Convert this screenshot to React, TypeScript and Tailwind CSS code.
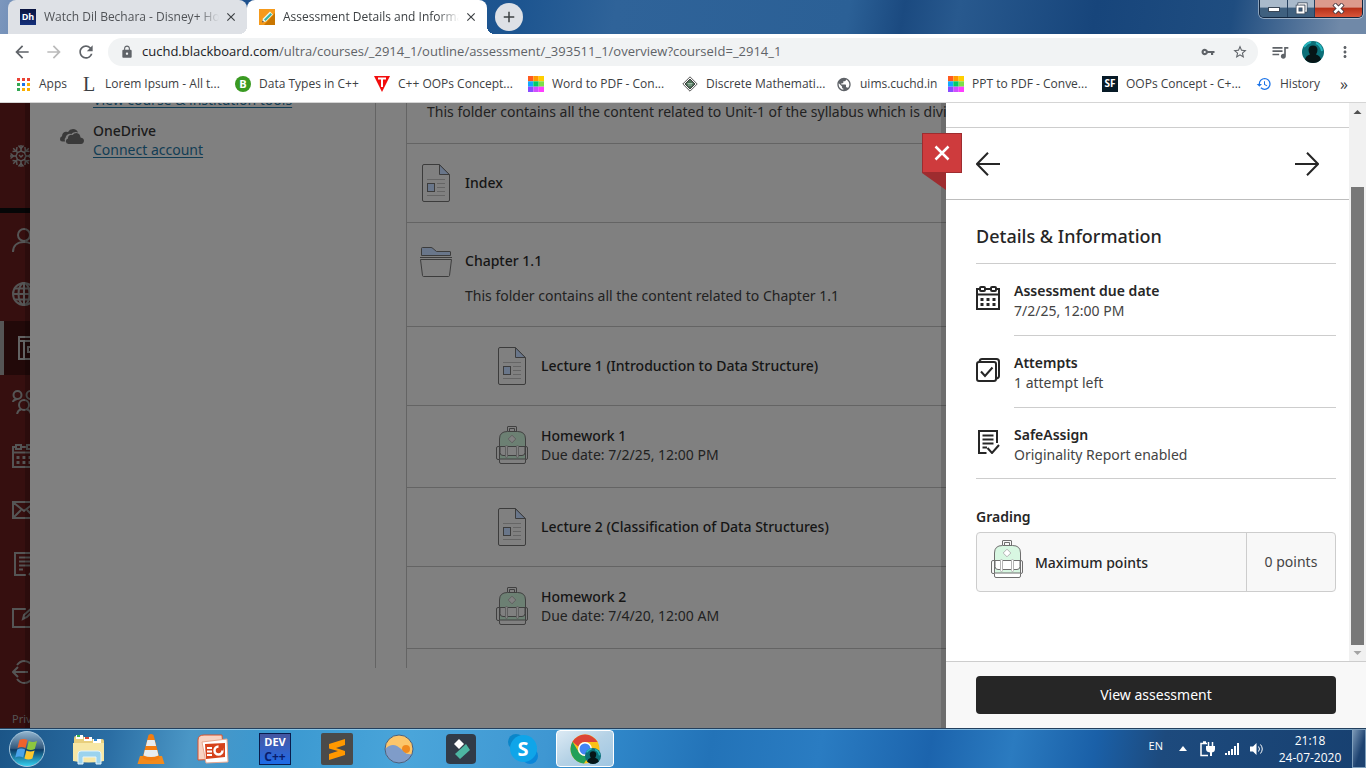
import React from "react";
import { IoMdKey } from "react-icons/io";
import {
  MdArrowBack,
  MdArrowForward,
  MdClose,
  MdHistory,
  MdLock,
  MdMoreVert,
  MdPublic,
  MdQueueMusic,
  MdRefresh,
  MdStarBorder,
  MdAdd,
} from "react-icons/md";

/* ---------- Course content icons ---------- */

type Tone = "dim" | "bright";

function DocumentIcon() {
  return (
    <svg width="28" height="38" viewBox="0 0 28 38" fill="none" stroke="#3c3c3c">
      <path d="M17.5.5H2A1.5 1.5 0 0 0 .5 2v34A1.5 1.5 0 0 0 2 37.500h24a1.500 1.500 0 0 0 1.500-1.500V10.500z" />
      <path d="M17.500.8v9.700h9.800z" fill="#69768a" />
      <path d="M5 15.500h18M15 19.500h8M15 23.500h8M15 27.500h8M5 31.500h18" stroke="#656565" />
      <rect x="5.500" y="19.500" width="7" height="8" fill="#69768a" />
    </svg>
  );
}

function FolderIcon() {
  return (
    <svg width="32" height="30" viewBox="0 0 32 30" fill="none" stroke="#3c3c3c">
      <path d="M1.500 8.500v-7q0-1 1-1H11q1 0 2 1l3.500 3H30q.5 0 .5.5v3.500z" fill="#69768a" />
      <path d="M0 10.500h32" />
      <path d="M.5 12.500h31l-2 16q-.2 1-1 1H3.500q-.8 0-1-1z" />
    </svg>
  );
}

function BackpackIcon({ tone }: { tone: Tone }) {
  const line = tone === "dim" ? "#404040" : "#6f6f6f";
  const green = tone === "dim" ? "#6c8073" : "#d8f7e2";
  const blank = tone === "dim" ? "#808080" : "#ffffff";
  const strap = tone === "dim" ? "#606060" : "#b5b5b5";
  return (
    <svg width="32" height="38" viewBox="0 0 32 38" fill="none" stroke={line}>
      <path d="M11.500 5V1q0-.5.500-.5h8q.5 0 .5.500v4M13.500 5V2.500h5V5" />
      <path d="M3.500 33V13q0-7.500 8-7.500h10q8 0 8 7.500v20z" fill={green} />
      <path d="M16 9.200l3.800 3.800-3.800 3.800-3.800-3.800z" fill={blank} stroke={strap} />
      <path d="M4 20.500h25v6q0 3-3 3H7q-3 0-3-3z" fill={blank} />
      <path d="M3.500 20.500H2Q.5 20.500.5 22v10q0 1.500 1.500 1.500h28q1.500 0 1.500-1.500V22q0-1.500-1.500-1.500h-1.500" />
      <rect x="9.500" y="19.500" width="2" height="12" rx="1" fill={blank} stroke={strap} />
      <rect x="20.500" y="19.500" width="2" height="12" rx="1" fill={blank} stroke={strap} />
      <path d="M3.500 33.500V36q0 1.500 1.500 1.500h23q1.500 0 1.500-1.500v-2.500" fill={blank} />
    </svg>
  );
}

function CalendarIcon() {
  return (
    <svg width="24" height="24" viewBox="0 0 24 24" fill="none" stroke="currentColor" strokeWidth="2">
      <path d="M4 3H1v20h22V3h-3M10 3h4M1 8.500h22" />
      <rect x="4" y="1" width="5" height="4" rx="1" />
      <rect x="15" y="1" width="5" height="4" rx="1" />
      <path d="M4.500 13.500h3M10.500 13.500h3M16.500 13.500h3M4.500 18.500h3M10.500 18.500h3M16.500 18.500h3" strokeWidth="3" />
    </svg>
  );
}

function AttemptsIcon() {
  return (
    <svg width="24" height="24" viewBox="0 0 24 24" fill="none" stroke="currentColor" strokeWidth="2">
      <rect x="1" y="4" width="19" height="19" rx="2" />
      <path d="M3.500 3.500Q4 1 6 1h14.500Q23 1 23 3.500V18q0 2-2.500 2.500" />
      <path d="M5 13.500l4 4.500 7.500-8.500" />
    </svg>
  );
}

function ReportIcon() {
  return (
    <svg width="24" height="24" viewBox="0 0 24 24" fill="none" stroke="currentColor" strokeWidth="2">
      <path d="M10.500 23H3V1h18v12" />
      <path d="M6.500 5.500h11M6.500 9.500h11M6.500 13.500h11M6.500 17.500h4.500" />
      <path d="M11.500 18l4.500 5 7-8" />
    </svg>
  );
}

/* ---------- Left navigation ---------- */

function NavIcon({ children }: { children: React.ReactNode }) {
  return (
    <svg
      className="shrink-0"
      width="24"
      height="24"
      viewBox="0 0 24 24"
      fill="none"
      stroke="currentColor"
      strokeWidth="2"
    >
      {children}
    </svg>
  );
}

const navItems: { label: string; active?: boolean; icon: React.ReactNode }[] = [
  { label: "Profile", icon: <><circle cx="12" cy="7" r="6" /><path d="M1 24c0-6 4-10 11-10s11 4 11 10" /></> },
  {
    label: "Institution page",
    icon: <><circle cx="12" cy="12" r="11" /><ellipse cx="12" cy="12" rx="5.500" ry="11" /><path d="M12 1v22M1 12h22M3 6.500h18M3 17.500h18" /></>,
  },
  { label: "Courses", active: true, icon: <path d="M3 1h20v22H3zM3 5h20M8 5v18M12 11h8v5h-8z" /> },
  {
    label: "Organizations",
    icon: <><circle cx="5.500" cy="5" r="4" /><circle cx="18.500" cy="5" r="4" /><circle cx="12" cy="15" r="5" /><path d="M1 12q0-2 4-3M23 12q0-2-4-3M5 24q1-4 4-4.500M19 24q-1-4-4-4.500" /></>,
  },
  {
    label: "Calendar",
    icon: <><path d="M4 3H1v20h22V3h-3M10 3h4M1 8.500h22" /><path d="M4 1h5v4H4zM15 1h5v4h-5z" /><path d="M4.500 13.500h3M10.500 13.500h3M16.500 13.500h3M4.500 18.500h3M10.500 18.500h3M16.500 18.500h3" strokeWidth="3" /></>,
  },
  { label: "Messages", icon: <path d="M1 4h22v16H1zM2 5l10 8 10-8M2 19l7-7M22 19l-7-7" /> },
  { label: "Grades", icon: <path d="M14 23H3V1h18v14M7 5.500h11M7 9.500h11M7 13.500h11M7 17.500h4M17 23l5-6" /> },
  { label: "Tools", icon: <path d="M14 3H1v18h21V11M11 13l1-4 9-8 2 2-8 8z" /> },
  { label: "Sign out", icon: <path d="M16 12H1M6 7l-5 5 5 5M5 5c2-2.500 4-4 7-4s11 3 11 11-8 11-11 11-5-1.500-7-4" /> },
];

function SideNav() {
  return (
    <nav className="relative flex w-[30px] shrink-0 flex-col overflow-hidden whitespace-nowrap bg-[#360f0f] text-[#555]">
      <div className="flex h-[105px] shrink-0 items-center pl-[9px]">
        <NavIcon>
          <g strokeWidth="1.500">
            <path d="M12 1v6M12 17v6M1 12h6M17 12h6M4.200 4.200l4.300 4.300M15.500 15.500l4.300 4.300M19.800 4.200l-4.300 4.300M4.200 19.800l4.300-4.300" />
            <path d="M9.500 1.500l2.500 3 2.500-3M9.500 22.500l2.500-3 2.500 3M1.500 9.500l3 2.500-3 2.500M22.500 9.500l-3 2.500 3 2.500M3.500 7.500l4-.5.500-4M20.500 7.500l-4-.5-.5-4M3.500 16.500l4 .5.500 4M20.500 16.500l-4 .5-.5 4" />
            <path d="M12 7l3.500 1.500L17 12l-1.500 3.500L12 17l-3.500-1.500L7 12l1.500-3.500zM10 11l2 2 2-2" />
          </g>
        </NavIcon>
      </div>
      <div className="h-[5px] shrink-0 bg-[#050607]" />
      {navItems.map((item) => (
        <a
          key={item.label}
          href="#"
          aria-label={item.label}
          className={
            item.active
              ? "flex h-[54px] shrink-0 items-center border-l-4 border-[#555] bg-[#220909] pl-3 text-[#636363]"
              : "flex h-[54px] shrink-0 items-center pl-3"
          }
        >
          <NavIcon>{item.icon}</NavIcon>
        </a>
      ))}
      <a href="#" className="pl-3 pt-3 text-[11px] leading-4">
        Privacy
      </a>
      <div className="absolute inset-y-0 right-0 w-[5px] bg-black/20" />
    </nav>
  );
}

/* ---------- Course outline ---------- */

function ToolsPanel() {
  return (
    <aside className="mb-[60px] flex w-[346px] shrink-0 flex-col overflow-hidden border-r border-[#646464] pl-[30px]">
      <div className="-mt-[13px] flex flex-col gap-3">
        <a href="#" className="pl-[33px] text-[#123d54] underline underline-offset-2">
          View course &amp; institution tools
        </a>
        <div className="flex items-start gap-[9px]">
          <svg className="mt-2 shrink-0" width="24" height="15" viewBox="0 0 24 15" fill="#3a3a3a">
            <path d="M5 12.500H2.500A2.500 2.500 0 0 1 0 10q0-2 2-2.800Q2.200 3.500 5.500 2.800q1.300-.2 2.500.3Q9.500.2 13 0q3.800 0 5 3.500-2-1-4.500 0-1 .4-2 1.500-3.300-.8-5 1.500-.8 1.200-.8 2Q4 9.700 5 12.500z" />
            <path d="M8.500 15q-2.500-.2-2.700-2.700.1-2.200 2.200-2.700-.2-3.200 3-3.800.8 0 1.500.3Q14 4 16.500 4q3.600.3 4 4.500Q23.800 9 24 11.800q-.2 2.900-3 3.200z" />
          </svg>
          <div className="flex flex-col">
            <span className="font-medium text-[#1b1b1b]">OneDrive</span>
            <a href="#" className="text-[#123d54] underline underline-offset-2">
              Connect account
            </a>
          </div>
        </div>
      </div>
    </aside>
  );
}

function OutlineRow({
  title,
  note,
  icon,
  nested = false,
}: {
  title: string;
  note?: string;
  icon: React.ReactNode;
  nested?: boolean;
}) {
  return (
    <li
      className={`flex shrink-0 items-center gap-[13px] border-b border-[#646464] ${
        note ? "h-[82px] pb-1" : "h-[79px]"
      } ${nested ? "pl-[89px]" : "pl-[13px]"}`}
    >
      <span className="flex w-8 shrink-0 justify-center">{icon}</span>
      <div className={note ? "" : "pb-0.5"}>
        <h3 className="font-medium text-[#151515]">{title}</h3>
        {note && <p>{note}</p>}
      </div>
    </li>
  );
}

function CourseOutline() {
  return (
    <ul className="mb-[60px] ml-[30px] flex min-w-0 flex-1 flex-col overflow-hidden whitespace-nowrap border-l border-[#646464]">
      <li className="h-[41px] shrink-0 border-b border-[#646464] pl-5 leading-[17px]">
        This folder contains all the content related to Unit-1 of the syllabus which is divided into chapters
      </li>
      <OutlineRow title="Index" icon={<DocumentIcon />} />
      <li className="flex h-[104px] shrink-0 gap-[13px] border-b border-[#646464] pl-[13px] pt-6">
        <span className="w-8 shrink-0">
          <FolderIcon />
        </span>
        <div className="flex flex-col gap-4 pt-1">
          <h3 className="font-medium text-[#151515]">Chapter 1.1</h3>
          <p>This folder contains all the content related to Chapter 1.1</p>
        </div>
      </li>
      <OutlineRow nested title="Lecture 1 (Introduction to Data Structure)" icon={<DocumentIcon />} />
      <OutlineRow nested title="Homework 1" note="Due date: 7/2/25, 12:00 PM" icon={<BackpackIcon tone="dim" />} />
      <OutlineRow nested title="Lecture 2 (Classification of Data Structures)" icon={<DocumentIcon />} />
      <OutlineRow nested title="Homework 2" note="Due date: 7/4/20, 12:00 AM" icon={<BackpackIcon tone="dim" />} />
    </ul>
  );
}

/* ---------- Assessment drawer ---------- */

const details = [
  { title: "Assessment due date", value: "7/2/25, 12:00 PM", icon: <CalendarIcon /> },
  { title: "Attempts", value: "1 attempt left", icon: <AttemptsIcon /> },
  { title: "SafeAssign", value: "Originality Report enabled", icon: <ReportIcon /> },
];

function Drawer() {
  return (
    <section className="relative flex w-[420px] shrink-0 flex-col bg-white">
      <div className="absolute inset-y-0 -left-[5px] w-[5px] bg-black/15" />
      <div className="absolute -left-6 top-[30px]">
        <button
          aria-label="Close"
          className="flex size-10 items-center justify-center border border-[#9e2c2f] bg-[#ce3b3d] text-white"
        >
          <svg width="16" height="16" viewBox="0 0 16 16" fill="none" stroke="currentColor" strokeWidth="2.500">
            <path d="M1.500 1.500l13 13M14.500 1.500l-13 13" />
          </svg>
        </button>
        <svg className="block" width="24" height="17" viewBox="0 0 24 17">
          <path d="M0 0h24v17z" fill="#9e2c2f" />
        </svg>
      </div>

      <div className="flex min-h-0 flex-1">
        <div className="flex min-w-0 flex-1 flex-col">
          <div className="h-[25px] shrink-0 border-b border-[#cdcdcd]" />
          <div className="flex h-[72px] shrink-0 items-center justify-between border-b border-[#bdbdbd] px-[30px] text-[#262626]">
            <button aria-label="Previous item">
              <svg width="24" height="24" viewBox="0 0 24 24" fill="none" stroke="currentColor" strokeWidth="2">
                <path d="M24 12H1.500M12 .7L1 12l11 11.300" />
              </svg>
            </button>
            <button aria-label="Next item">
              <svg width="24" height="24" viewBox="0 0 24 24" fill="none" stroke="currentColor" strokeWidth="2">
                <path d="M0 12h22.500M12 .7L23 12 12 23.300" />
              </svg>
            </button>
          </div>
          <div className="flex flex-1 flex-col pl-[30px] pr-[13px]">
            <h2 className="flex h-16 shrink-0 items-center border-b border-[#cdcdcd] pt-2 text-lg font-medium text-[#262626]">
              Details &amp; Information
            </h2>
            <ul className="border-b border-[#cdcdcd]">
              {details.map((d, i) => (
                <li key={d.title} className="flex gap-3.5 text-[#262626]">
                  <span className="mt-[22px] w-6 shrink-0">{d.icon}</span>
                  <div
                    className={
                      i < details.length - 1
                        ? "h-[72px] flex-1 border-b border-[#cdcdcd] pt-[17px] leading-5"
                        : "h-[70px] flex-1 pt-[17px] leading-5"
                    }
                  >
                    <h3 className="font-semibold">{d.title}</h3>
                    <p className="text-[#444]">{d.value}</p>
                  </div>
                </li>
              ))}
            </ul>
            <h3 className="mb-[5px] mt-7 font-semibold leading-5 text-[#262626]">Grading</h3>
            <div className="flex h-[60px] shrink-0 rounded-sm border border-[#cdcdcd] bg-[#f8f8f8]">
              <div className="flex flex-1 items-center gap-3 pl-3.5 pr-2">
                <span className="shrink-0 pb-1.5">
                  <BackpackIcon tone="bright" />
                </span>
                <span className="font-medium text-[#262626]">Maximum points</span>
              </div>
              <div className="flex w-[89px] items-center justify-center border-l border-[#cdcdcd] pb-0.5 text-[#444]">
                0 points
              </div>
            </div>
          </div>
        </div>
        <div className="flex w-[17px] shrink-0 flex-col items-center bg-[#f1f1f1]">
          <svg className="h-[84px] shrink-0" width="17" height="84" viewBox="0 0 17 84">
            <path d="M4.500 11L8.500 7l4 4z" fill="#505050" />
          </svg>
          <div className="w-[13px] flex-1 bg-[#787878]" />
          <svg className="shrink-0" width="17" height="16" viewBox="0 0 17 16">
            <path d="M4.500 6l4 4 4-4z" fill="#a3a3a3" />
          </svg>
        </div>
      </div>

      <div className="border-t border-[#cdcdcd] bg-[#f8f8f8] px-[30px] py-3.5">
        <button className="h-[38px] w-full rounded-sm bg-[#262626] pb-0.5 text-white">View assessment</button>
      </div>
    </section>
  );
}

/* ---------- Browser chrome ---------- */

function ColorGrid() {
  const colors = ["#ff5a1f", "#ff9a00", "#ffcf00", "#12a7ff", "#00cc66", "#7be04a", "#8a4dff", "#d04dff", "#ff3dff"];
  return (
    <svg width="16" height="16" viewBox="0 0 15 15">
      {colors.map((c, i) => (
        <rect key={c} x={(i % 3) * 5} y={Math.floor(i / 3) * 5} width="5" height="5" fill={c} />
      ))}
    </svg>
  );
}

function AppsGrid() {
  const colors = ["#ea4335", "#ea4335", "#ea4335", "#34a853", "#1a73e8", "#fbaf00", "#34a853", "#fbaf00", "#fbaf00"];
  return (
    <svg width="13" height="13" viewBox="0 0 13 13">
      {colors.map((c, i) => (
        <rect key={i} x={(i % 3) * 5} y={Math.floor(i / 3) * 5} width="3" height="3" fill={c} />
      ))}
    </svg>
  );
}

const bookmarks: { label: string; width: string; icon: React.ReactNode }[] = [
  { label: "Apps", width: "w-[66px]", icon: <AppsGrid /> },
  { label: "Lorem Ipsum - All t...", width: "w-[154px]", icon: <span className="font-[Liberation_Serif,serif] text-xl leading-none">L</span> },
  {
    label: "Data Types in C++",
    width: "w-[139px]",
    icon: <span className="flex size-4 shrink-0 items-center justify-center rounded-full bg-[#3a9a22] text-[11px] font-bold text-white">B</span>,
  },
  {
    label: "C++ OOPs Concept...",
    width: "w-[154px]",
    icon: (
      <svg width="16" height="16" viewBox="0 0 16 16">
        <path d="M0 0h16L8 16z" fill="#f20d0d" />
        <path d="M4 2.500h8M8 2.500V11" stroke="#fff" strokeWidth="2" />
      </svg>
    ),
  },
  { label: "Word to PDF - Con...", width: "w-[154px]", icon: <ColorGrid /> },
  {
    label: "Discrete Mathemati...",
    width: "w-[154px]",
    icon: (
      <svg width="16" height="16" viewBox="0 0 16 16">
        <path d="M8 .8L15.200 8 8 15.200.8 8z" fill="#fff" stroke="#555" strokeWidth="1" />
        <path d="M8 3l5 5-5 5-5-5z" fill="#4d6f58" stroke="#222" strokeWidth=".8" />
        <path d="M5.500 7.500h5M6 9h4" stroke="#b8d4c0" strokeWidth=".8" />
      </svg>
    ),
  },
  { label: "uims.cuchd.in", width: "w-[112px]", icon: <MdPublic className="size-[17px] text-[#5f6368]" /> },
  { label: "PPT to PDF - Conve...", width: "w-[154px]", icon: <ColorGrid /> },
  {
    label: "OOPs Concept - C+...",
    width: "w-[154px]",
    icon: <span className="flex size-4 shrink-0 items-center justify-center bg-[#071a26] text-[10px] font-bold text-white">SF</span>,
  },
  { label: "History", width: "w-[64px]", icon: <MdHistory className="size-4 text-[#1a73e8]" /> },
];

function Avatar({ className }: { className: string }) {
  return (
    <svg className={className} viewBox="0 0 22 22">
      <circle cx="11" cy="11" r="11" fill="#0c6f78" />
      <path d="M2 6q3-4 7-5M14 2q5 2 6 8" stroke="#25b5bd" strokeWidth="2" fill="none" />
      <path d="M3 18.500q1-4 5-5-1.500-2-1.500-5Q7 4.500 11 4.500t4.500 4q0 3-1.500 5 4 1 5 5-3.500 3.500-8 3.500t-8-3.500z" fill="#061517" />
    </svg>
  );
}

function Tab({ title, active, icon }: { title: string; active?: boolean; icon: React.ReactNode }) {
  return (
    <div
      className={`relative flex h-full shrink-0 items-center rounded-t-lg pl-3 pr-2 ${
        active ? "w-60 bg-white text-[#3c4043]" : "w-[239px] bg-[#dee1e6] text-[#505357]"
      }`}
    >
      {active && (
        <>
          <span className="absolute -left-2 bottom-0 size-2 bg-[radial-gradient(circle_at_0_0,transparent_8px,white_8px)]" />
          <span className="absolute -right-2 bottom-0 size-2 bg-[radial-gradient(circle_at_100%_0,transparent_8px,white_8px)]" />
        </>
      )}
      {icon}
      <span className="ml-2 flex-1 overflow-hidden whitespace-nowrap [mask-image:linear-gradient(to_right,black_88%,transparent)]">
        {title}
      </span>
      <button aria-label="Close tab" className="ml-1 flex size-4 items-center justify-center text-[#3c4043]">
        <MdClose className="size-3.5" />
      </button>
    </div>
  );
}

function WindowControls() {
  return (
    <div className="ml-auto mr-[3px] flex h-[18px] overflow-hidden rounded-b-[5px] border border-t-0 border-[#12263f] shadow-[0_0_0_1px_rgba(255,255,255,0.45)]">
      <button
        aria-label="Minimize"
        className="flex w-7 items-center justify-center border-r border-[#24405f] bg-linear-to-b from-[#a9bacb] from-40% to-[#3f607f] to-50%"
      >
        <svg width="12" height="6" viewBox="0 0 12 6">
          <rect x=".5" y="1.500" width="11" height="4" fill="#fff" stroke="#3a4757" />
        </svg>
      </button>
      <button
        aria-label="Restore"
        className="flex w-[27px] items-center justify-center border-r border-[#24405f] bg-linear-to-b from-[#a9bacb] from-40% to-[#3f607f] to-50%"
      >
        <svg width="13" height="13" viewBox="0 0 13 13" fill="none">
          <path d="M4 4V2h7v7H9" stroke="#3a4757" strokeWidth="3" />
          <path d="M4 4V2h7v7H9" stroke="#fff" strokeWidth="1.500" />
          <rect x="2.500" y="4.500" width="6" height="6" stroke="#3a4757" strokeWidth="3.500" />
          <rect x="2.500" y="4.500" width="6" height="6" stroke="#fff" strokeWidth="2" />
        </svg>
      </button>
      <button
        aria-label="Close window"
        className="flex w-[47px] items-center justify-center bg-linear-to-b from-[#dc9a8d] from-40% via-[#b8311a] via-50% to-[#d9563a]"
      >
        <svg width="13" height="11" viewBox="0 0 13 11" fill="none">
          <path d="M2 1l9 9M11 1l-9 9" stroke="#4b3a42" strokeWidth="4.500" />
          <path d="M2.500 1.500l8 8M10.500 1.500l-8 8" stroke="#fff" strokeWidth="2.500" />
        </svg>
      </button>
    </div>
  );
}

function BrowserChrome() {
  return (
    <header className="shrink-0 border-b border-[#d5d5d5] bg-white font-[Open_Sans,Noto_Sans,sans-serif] text-xs text-[#3c4043]">
      <div className="flex h-[34px] bg-[linear-gradient(100deg,#7c97bd_0%,#1d4f8b_12%,#1d5590_38%,#2f6399_45%,#2b6096_62%,#1b4a80_66%,#28598e_70%,#17457b_80%,#1f4d80_90%,#7089a8_98%)] pl-2">
        <Tab
          title="Watch Dil Bechara - Disney+ Hotstar"
          icon={
            <span className="flex size-4 shrink-0 items-center justify-center bg-linear-to-b from-[#0a1440] to-[#14307c] text-[9px] font-bold text-white">
              Dh
            </span>
          }
        />
        <Tab
          active
          title="Assessment Details and Information"
          icon={
            <svg className="shrink-0" width="16" height="16" viewBox="0 0 16 16">
              <path d="M0 0h16v16H0z" fill="#f59a1b" />
              <path d="M16 4v12H5z" fill="#c97600" />
              <path d="M3 13.500l1-4 7-7 3 3-7 7z" fill="#eaf6ef" />
              <path d="M5 10.500l6.500-6.500 1.500 1.500L6.500 12z" fill="#35b3a4" />
              <path d="M3 13.500l.6-2 1.400 1.400z" fill="#553311" />
            </svg>
          }
        />
        <button
          aria-label="New tab"
          className="ml-2 mt-[3px] flex size-7 shrink-0 items-center justify-center rounded-full bg-[#dee1e6] text-[#3c4043]"
        >
          <MdAdd className="size-[18px]" />
        </button>
        <WindowControls />
      </div>

      <div className="flex h-9 items-center pl-3 pr-3 text-[#5f6368]">
        <button aria-label="Back" className="mr-3">
          <MdArrowBack className="size-5" />
        </button>
        <button aria-label="Forward" className="mr-3 text-[#bababa]">
          <MdArrowForward className="size-5" />
        </button>
        <button aria-label="Reload">
          <MdRefresh className="size-5" />
        </button>
        <div className="ml-3 flex h-7 min-w-0 flex-1 items-center rounded-full bg-[#f1f3f4] pl-3 pr-2.5">
          <MdLock className="size-3.5 shrink-0" />
          <span className="ml-2 flex-1 whitespace-nowrap text-[13px]">
            <span className="text-[#202124]">cuchd.blackboard.com</span>
            /ultra/courses/_2914_1/outline/assessment/_393511_1/overview?courseId=_2914_1
          </span>
          <button aria-label="Saved passwords">
            <IoMdKey className="size-4" />
          </button>
          <button aria-label="Bookmark this tab" className="ml-4">
            <MdStarBorder className="size-4" />
          </button>
        </div>
        <button aria-label="Media controls" className="ml-3">
          <MdQueueMusic className="size-5" />
        </button>
        <button aria-label="Profile" className="ml-3">
          <Avatar className="size-[22px]" />
        </button>
        <button aria-label="Menu" className="ml-3">
          <MdMoreVert className="size-[18px]" />
        </button>
      </div>

      <div className="flex h-8 items-center whitespace-nowrap pb-1 pl-[15px]">
        {bookmarks.map((b) => (
          <a key={b.label} href="#" className={`flex shrink-0 items-center gap-2 ${b.width}`}>
            <span className="flex w-4 shrink-0 items-center justify-center">{b.icon}</span>
            {b.label}
          </a>
        ))}
        <button aria-label="More bookmarks" className="ml-auto mr-[18px] text-base leading-none">
          »
        </button>
      </div>
    </header>
  );
}

/* ---------- Taskbar ---------- */

function StartOrb() {
  return (
    <svg width="38" height="38" viewBox="0 0 38 38">
      <defs>
        <linearGradient id="orb" x1="0" y1="0" x2="0" y2="1">
          <stop offset="0" stopColor="#93b5cf" />
          <stop offset=".48" stopColor="#33597d" />
          <stop offset=".52" stopColor="#0c3b66" />
          <stop offset="1" stopColor="#35d3f2" />
        </linearGradient>
      </defs>
      <circle cx="19" cy="19" r="17.500" fill="url(#orb)" stroke="#a9c8dd" />
      <path d="M11.500 10q4-2 8 0l-2 8q-4-2-8 0z" fill="#f0622c" />
      <path d="M20.800 11q4 2 8.200 0l-2.200 8q-4 2-8 0z" fill="#8cc63f" />
      <path d="M9.200 19.500q4-2 8 0l-2 8q-4-2-8 0z" fill="#4aa3ea" />
      <path d="M18.400 20.500q4 2 8.200 0l-2.200 8q-4 2-8 0z" fill="#fdc82f" />
    </svg>
  );
}

const taskbarApps: { label: string; icon: React.ReactNode }[] = [
  {
    label: "File Explorer",
    icon: (
      <svg width="34" height="32" viewBox="0 0 34 32">
        <path d="M2 5q0-2 2-2h7l2 3h17q2 0 2 2v20H2z" fill="#e8cf7d" />
        <path d="M4 2h7v4H4zM12 4h8v4h-8zM21 6h8v4h-8z" fill="#fff" />
        <path d="M5 2h3v2H5z" fill="#3bb54a" /><path d="M13 4h4v2h-4z" fill="#d54a35" /><path d="M22 6h3v2h-3z" fill="#2c86d4" />
        <path d="M1 10h31v18q-15 3-31 0z" fill="#f7e7a5" />
        <path d="M6 31V21q0-3 3-3h17q3 0 3 3v10h-5v-7H11v7z" fill="#9bd3ee" stroke="#e3f4fb" />
      </svg>
    ),
  },
  {
    label: "VLC media player",
    icon: (
      <svg width="28" height="32" viewBox="0 0 28 32">
        <path d="M3 23h22l2.500 8H.5z" fill="#f28a1c" />
        <path d="M11.500 2q2.500-2 5 0l6 23q-8.500 5-17 0z" fill="#f47d10" />
        <path d="M10.400 7h7.200l1.500 6H8.900zM7.800 17h12.400l1.300 5.500q-7.500 3-15 0z" fill="#e8edf0" />
      </svg>
    ),
  },
  {
    label: "PowerPoint",
    icon: (
      <svg width="32" height="30" viewBox="0 0 32 30">
        <path d="M1 6q0-5 6-5h18l2 24-26 1z" fill="#f8d3c3" stroke="#d9532c" />
        <path d="M5 8l25-3 1 23-22 1z" fill="#fff" stroke="#e9a88f" />
        <path d="M8 10l20-1v14l-19 2z" fill="#d6421b" />
        <path d="M10 14h5M10 17.500h5M10 21h5" stroke="#fff" strokeWidth="2" />
        <circle cx="21.500" cy="16.500" r="4" fill="none" stroke="#fff" strokeWidth="2.500" />
        <path d="M21.500 16.500V11h5v5.500z" fill="#d6421b" />
      </svg>
    ),
  },
  {
    label: "Dev-C++",
    icon: (
      <span className="flex size-8 flex-col items-center justify-center overflow-hidden border border-[#0a1c4d] bg-linear-to-b from-[#4356a0] to-[#1a6be8] font-bold">
        <span className="text-[11px] leading-[15px] text-white">DEV</span>
        <span className="text-xs leading-[15px] text-[#0a1c6b]">C++</span>
      </span>
    ),
  },
  {
    label: "Sublime Text",
    icon: (
      <svg width="32" height="32" viewBox="0 0 32 32">
        <rect width="32" height="32" rx="2" fill="#4a4a4a" />
        <path d="M8 11l16-5v6l-9 3 9 3v4L8 27v-6l9-3-9-2.500z" fill="#ff9800" />
      </svg>
    ),
  },
  {
    label: "Weather",
    icon: (
      <svg width="30" height="30" viewBox="0 0 30 30">
        <circle cx="15" cy="15" r="14" fill="#fcc66a" />
        <circle cx="22" cy="15" r="4" fill="#f08a1e" />
        <path d="M1 15q6-6 12-3 5 3 7 6 3 3 8.500 2-3 9-13.500 9Q2 28.500 1 15z" fill="#7f9cc9" />
        <circle cx="15" cy="15" r="14" fill="none" stroke="#47607f" />
      </svg>
    ),
  },
  {
    label: "Filmora",
    icon: (
      <svg width="30" height="30" viewBox="0 0 30 30">
        <rect width="30" height="30" rx="4" fill="#313b48" />
        <path d="M13 5l5 5-5 5-5-5z" fill="#fff" />
        <path d="M20 10l4 6-10 9-5-5z" fill="#4db6a2" />
      </svg>
    ),
  },
  {
    label: "Skype",
    icon: (
      <span className="relative flex size-[30px] items-center justify-center">
        <span className="absolute left-0 top-0 size-4 rounded-full bg-[#0a86c9]" />
        <span className="absolute bottom-0 right-0 size-4 rounded-full bg-[#0a86d9]" />
        <span className="relative flex size-[27px] items-center justify-center rounded-full bg-[#0fa5e9] text-xl font-bold leading-none text-white">
          S
        </span>
      </span>
    ),
  },
];

function ChromeLogo() {
  return (
    <svg width="30" height="30" viewBox="0 0 30 30">
      <circle cx="15" cy="15" r="14.500" fill="#fbc116" />
      <path d="M2.500 7.700A14.500 14.500 0 0 1 27.600 8H15a7 7 0 0 0-6.600 4.800z" fill="#dc4437" />
      <path d="M2.500 7.700A14.500 14.500 0 0 0 14 29.500l6.500-10.700A7 7 0 0 1 9 18.600z" fill="#21a05a" />
      <circle cx="15" cy="15" r="7" fill="#fff" />
      <circle cx="15" cy="15" r="5.500" fill="#4285f4" />
    </svg>
  );
}

function Taskbar() {
  return (
    <footer className="flex h-10 shrink-0 items-stretch border-t border-[#23405e] bg-[linear-gradient(100deg,#1b5587_0%,#2a6da3_8%,#4b97c6_14%,#3a98d0_20%,#4aa5da_30%,#3f97d2_40%,#2f86c8_45%,#2373b8_52%,#2a7cc2_60%,#1c64ad_68%,#2b7bc0_74%,#1a60a8_80%,#1d4a7d_85%,#174070_100%)] font-[Open_Sans,Noto_Sans,sans-serif] text-xs text-white shadow-[inset_0_1px_0_rgba(170,215,240,0.7)]">
      <button aria-label="Start" className="flex w-[58px] items-center pl-2">
        <StartOrb />
      </button>
      {taskbarApps.map((app) => (
        <button key={app.label} aria-label={app.label} className="flex w-[62px] shrink-0 items-center justify-center">
          {app.icon}
        </button>
      ))}
      <button
        aria-label="Google Chrome"
        className="relative my-px ml-0.5 flex w-[58px] shrink-0 items-center justify-center rounded-sm border border-white bg-linear-to-br from-[#dceaf4] via-[#b5d2e6] to-[#9fc6e2]"
      >
        <ChromeLogo />
        <Avatar className="absolute bottom-0.5 right-3 size-4" />
      </button>

      <div className="ml-auto flex items-center">
        <span className="mb-1 mr-4 text-[11px]">EN</span>
        <svg className="mr-3" width="8" height="5" viewBox="0 0 8 5">
          <path d="M0 5l4-5 4 5z" fill="#fff" />
        </svg>
        <svg className="mr-2.5" width="16" height="16" viewBox="0 0 16 16" fill="none" stroke="#fff" strokeWidth="1.500">
          <path d="M8 2.500H2v12h7M4 1h3" />
          <path d="M9.500 1v4M13.500 1v4" />
          <path d="M7 5h9v3q0 3-3 3.500V15h-2v-3.500Q7 11 7 8z" fill="#fff" stroke="none" />
        </svg>
        <svg className="mr-2.5" width="15" height="12" viewBox="0 0 15 12" fill="#fff">
          <path d="M0 10h2v2H0zM3 8h2v4H3zM6 6h2v6H6zM9 3h2v9H9zM12 0h2v12h-2z" />
        </svg>
        <svg className="mr-3.5" width="14" height="14" viewBox="0 0 14 14" fill="none" stroke="#fff">
          <path d="M0 4.500h3L6.500 1v12L3 9.500H0z" fill="#fff" stroke="none" />
          <path d="M8.500 4.500q2 2.500 0 5M10.500 2.500q3.500 4.500 0 9" />
        </svg>
        <div className="mr-2.5 flex w-16 flex-col items-center leading-[17px]">
          <span>21:18</span>
          <span>24-07-2020</span>
        </div>
        <button
          aria-label="Show desktop"
          className="h-full w-3.5 border border-[#7f9fbc] bg-linear-to-br from-[#7b98b5] to-[#1d4270] to-60%"
        />
      </div>
    </footer>
  );
}

export default function App() {
  return (
    <div className="flex h-screen flex-col overflow-hidden">
      <BrowserChrome />
      <main className="flex min-h-0 flex-1 bg-[#808080] font-[Noto_Sans,Open_Sans,sans-serif] text-sm leading-[19px] text-[#222]">
        <SideNav />
        <ToolsPanel />
        <CourseOutline />
        <Drawer />
      </main>
      <Taskbar />
    </div>
  );
}
